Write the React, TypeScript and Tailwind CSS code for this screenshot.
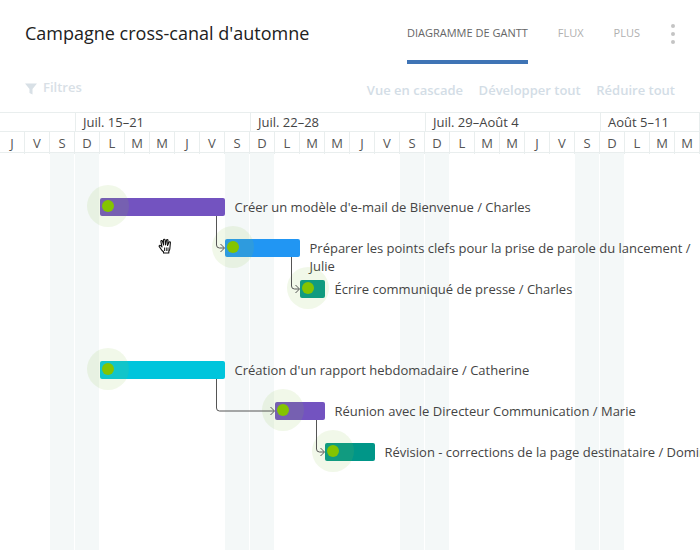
const weeks = [
  { label: '', width: 76 },
  { label: 'Juil. 15–21', width: 175 },
  { label: 'Juil. 22–28', width: 175 },
  { label: 'Juil. 29–Août 4', width: 175 },
  { label: 'Août 5–11', width: 99 },
]

const days = 'JVSDLMMJVSDLMMJVSDLMMJVSDLMM'.split('')

const tasks = [
  { left: 100, top: 45, width: 125, color: 'bg-[#7353c0]', label: 'Créer un modèle d\'e-mail de Bienvenue / Charles', box: 'w-[460px]' },
  { left: 225, top: 86, width: 75, color: 'bg-[#2196f3]', label: 'Préparer les points clefs pour la prise de parole du lancement / Julie', box: 'w-[385px]' },
  { left: 300, top: 127, width: 25, color: 'bg-[#009688]', label: 'Écrire communiqué de presse / Charles', box: 'w-[360px]' },
  { left: 100, top: 208, width: 125, color: 'bg-[#00c5dc]', label: 'Création d\'un rapport hebdomadaire / Catherine', box: 'w-[460px]' },
  { left: 275, top: 249, width: 50, color: 'bg-[#7353c0]', label: 'Réunion avec le Directeur Communication / Marie', box: 'w-[360px]' },
  { left: 325, top: 290, width: 50, color: 'bg-[#009688]', label: 'Révision - corrections de la page destinataire / Dominique', box: 'w-[460px]' },
]

// y values are relative to the top of the chart area
const links = [
  'M216.5 63V92Q216.5 95 219.5 95H224',
  'M291.5 104V133Q291.5 136 294.5 136H299',
  'M216.5 226V255Q216.5 258 219.5 258H274',
  'M316.5 267V296Q316.5 299 319.5 299H324',
]

function GrabHand() {
  return (
    <svg width="18" height="18" viewBox="0 0 18 18" className="absolute left-[157px] top-[84px]">
      <path
        d="M5 13.5 2.3 9.6c-.7-1 .6-1.9 1.4-1L5 10 3.9 4.6c-.2-1 1.2-1.4 1.5-.4L6.600 8 6.500 3c0-1.100 1.500-1.100 1.600 0L8.600 8 9.500 3.300c.2-1 1.600-.8 1.500.3L10.500 8.500 12 5.200c.4-.9 1.700-.4 1.400.6L12.800 12c-.1 1-.5 1.700-1 2.300V16H6.500v-1.300z"
        fill="#fff"
        stroke="#111"
        strokeWidth="1.100"
        strokeLinejoin="round"
      />
      <path d="M7.500 10.500V14M9.300 10.500V14M11 10.500V14" stroke="#111" strokeWidth="0.900" />
    </svg>
  )
}

export default function App() {
  return (
    <div className="flex h-[550px] w-[700px] flex-col overflow-hidden bg-white font-['Open_Sans',sans-serif]">
      <header className="flex h-[64px] shrink-0 items-start justify-between pl-[25px] pr-[25px]">
        <h1 className="mt-[19px] text-[18px] leading-[28px] text-[#212121]">Campagne cross-canal d'automne</h1>
        <nav className="flex items-start">
          <div className="flex h-[64px] items-center border-b-[4px] border-[#3f74b5] pt-[6px] text-[11px] text-[#666]">
            DIAGRAMME DE GANTT
          </div>
          <div className="ml-[30px] flex h-[60px] items-center pt-[6px] text-[11px] text-[#b0b0b0]">FLUX</div>
          <div className="ml-[30px] flex h-[60px] items-center pt-[6px] text-[11px] text-[#b0b0b0]">PLUS</div>
          <div className="ml-[31px] mt-[24px] flex flex-col gap-[4px]">
            <span className="size-[4px] rounded-full bg-[#c4c4c4]" />
            <span className="size-[4px] rounded-full bg-[#c4c4c4]" />
            <span className="size-[4px] rounded-full bg-[#c4c4c4]" />
          </div>
        </nav>
      </header>

      <div className="flex h-[48px] shrink-0 items-center justify-between pl-[25px] pr-[25px] text-[13px] font-semibold text-[#d3dde6]">
        <div className="flex items-center gap-[6px] pt-[1px]">
          <svg width="12" height="12" viewBox="0 0 12 12">
            <path d="M0 .5h12L7.500 6v5.500L4.500 10V6z" fill="#d8e0e6" />
          </svg>
          <span className="-mt-[1px] text-[#d8e0e6]">Filtres</span>
        </div>
        <div className="flex gap-[15.5px] pt-[5px]">
          <span>Vue en cascade</span>
          <span>Développer tout</span>
          <span>Réduire tout</span>
        </div>
      </div>

      <div className="flex h-[20px] shrink-0 border-y border-[#e9eeee] text-[13px] leading-[18px] text-[#444]">
        {weeks.map((week, i) => (
          <div
            key={i}
            style={{ width: week.width }}
            className="shrink-0 border-r border-[#e9eeee] pl-[7px]"
          >
            {week.label}
          </div>
        ))}
      </div>

      <div className="grid h-[21px] shrink-0 grid-cols-[repeat(28,25px)] border-b border-[#e9eeee] text-[13px] leading-[22px] text-[#555]">
        {days.map((day, i) => (
          <div key={i} className="border-r border-[#e9eeee] text-center">
            {day}
          </div>
        ))}
      </div>

      <div className="relative flex-1">
        <div className="absolute inset-0 grid grid-cols-[repeat(28,25px)]">
          {days.map((day, i) => (
            <div key={i} className={day === 'S' || day === 'D' ? 'mr-px bg-[#f4f8f8]' : ''} />
          ))}
        </div>

        {tasks.map((task) => (
          <div key={task.label}>
            <div
              style={{ left: task.left, top: task.top, width: task.width }}
              className={`absolute h-[18px] rounded-[2px] ${task.color}`}
            />
            <div
              style={{ left: task.left - 13, top: task.top - 13 }}
              className="absolute size-[42px] rounded-full bg-[#8bc34a]/12"
            />
            <div
              style={{ left: task.left + 2, top: task.top + 2 }}
              className="absolute size-[12px] rounded-full bg-[#84c400]"
            />
            <div
              style={{ left: task.left + task.width + 9.5, top: task.top }}
              className={`absolute text-[13px] leading-[18px] text-[#444] ${task.box}`}
            >
              {task.label}
            </div>
          </div>
        ))}

        <svg width="700" height="397" className="absolute left-0 top-0" fill="none" stroke="#555">
          {links.map((d) => (
            <path key={d} d={d} />
          ))}
          <path d="M220.500 91l4 4-4 4M295.500 132l4 4-4 4M270.500 254l4 4-4 4M320.500 295l4 4-4 4" />
        </svg>

        <GrabHand />
      </div>
    </div>
  )
}
